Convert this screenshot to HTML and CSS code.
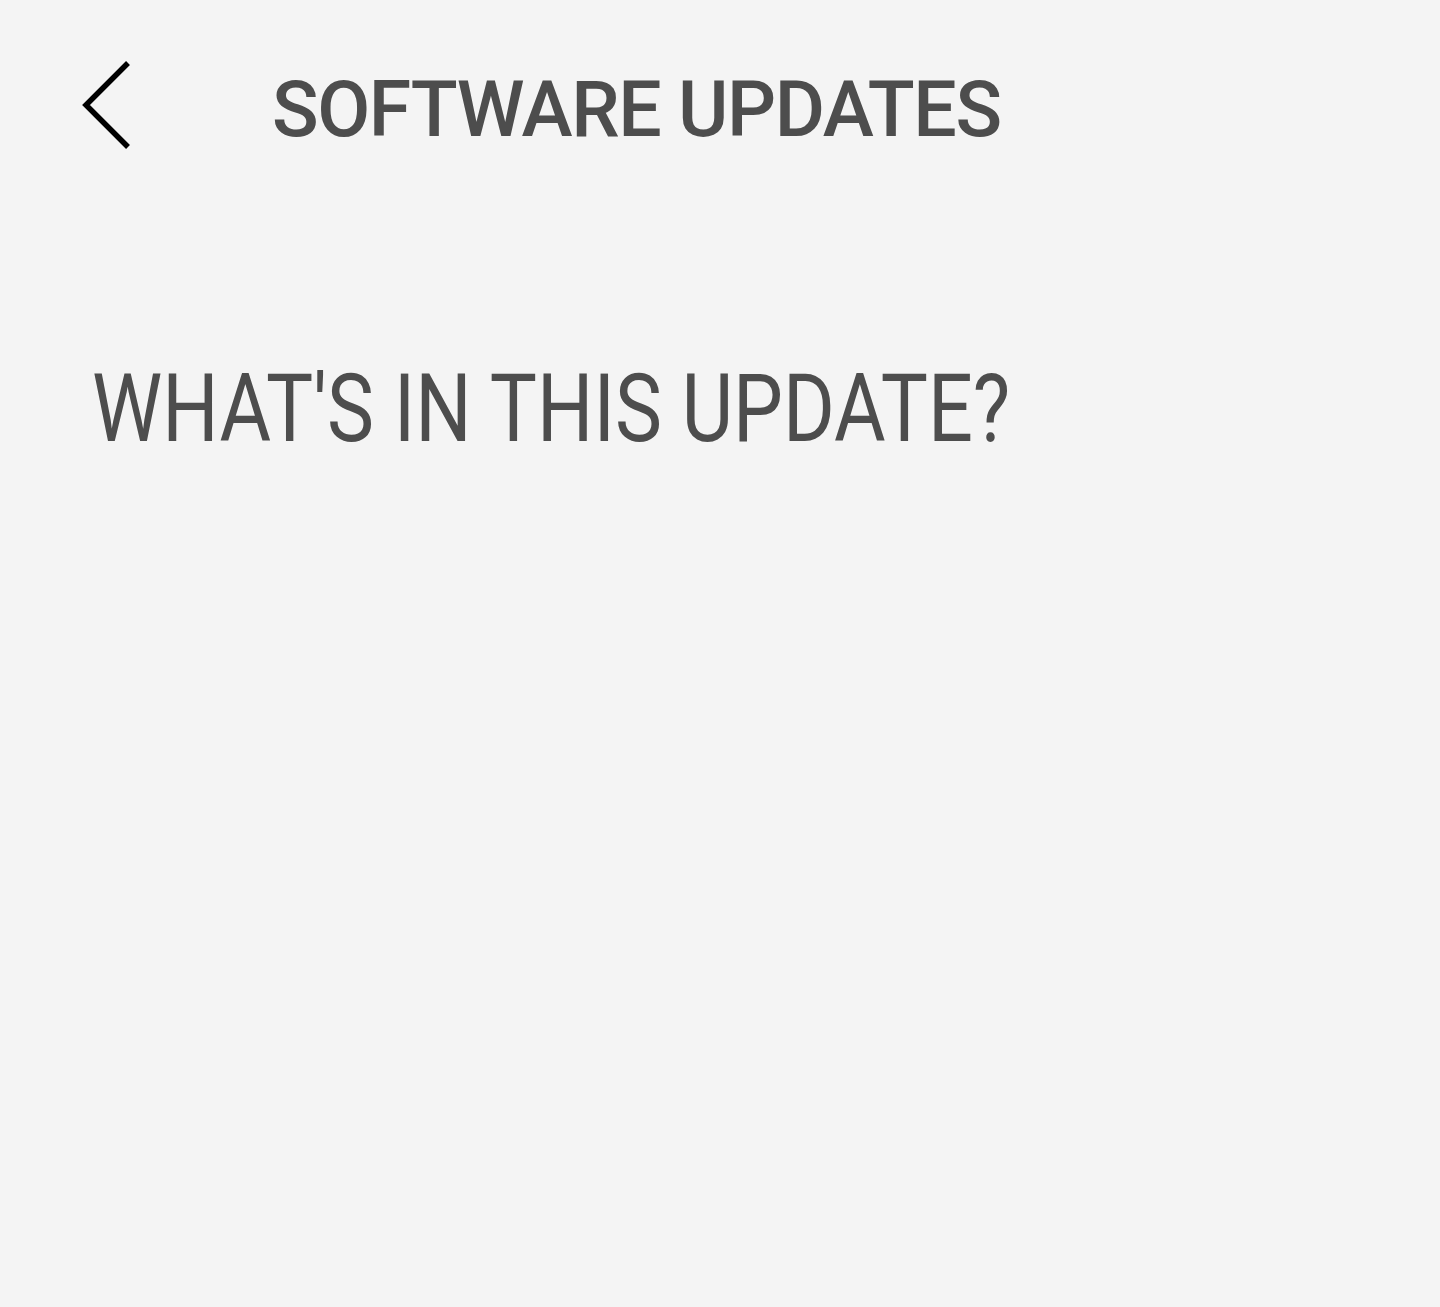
FILE: index.html
```html
<!DOCTYPE html>
<html>
<head>
  <title>Software Updates</title>
  <link rel="stylesheet" href="styles.css">
</head>
<body>
  <div class="screen">
    <header class="topbar">
      <button class="back" aria-label="Back">
        <svg width="52" height="90" viewBox="0 0 52 90">
          <polyline points="48,3 6,45 48,87" fill="none" stroke="#000" stroke-width="5.5"/>
        </svg>
      </button>
      <h1 class="title">SOFTWARE UPDATES</h1>
    </header>

    <section class="content">
      <h2 class="heading">WHAT'S IN THIS UPDATE?</h2>
    </section>
  </div>
</body>
</html>
```

FILE: styles.css
```css
html, body { margin: 0; background: #f4f4f4; }
body { font-family: Roboto, "Noto Sans", sans-serif; color: #4d4d4d; }
.screen { min-height: 1307px; }

.topbar { display: flex; align-items: center; padding: 60px 0 0 80px; height: 90px; }
.back { background: none; border: none; padding: 0; width: 52px; height: 90px; cursor: pointer; }
.back svg { display: block; }
.title { margin: 10px 0 0 140px; font-size: 77px; font-weight: 500; line-height: 1; letter-spacing: -1.4px; color: #4d4d4d; }

.content { padding: 212px 0 0 92px; }
.heading { margin: 0; font-size: 94px; font-weight: 400; line-height: 1; color: #4d4d4d; white-space: nowrap; transform: scaleX(0.842); transform-origin: left center; }
```
